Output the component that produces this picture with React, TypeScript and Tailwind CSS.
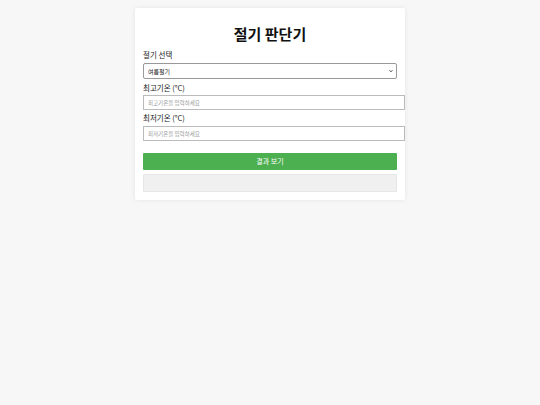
export default function App() {
  return (
    <div className="min-h-[405px] bg-[#f7f7f7] pt-[8px] font-['Noto_Sans_CJK_KR','Noto_Sans',sans-serif] text-[#222]">
      <div className="mx-auto w-[270px] bg-white px-[8px] pt-[16px] pb-[8px] shadow-[0_0_5px_rgba(0,0,0,0.08)] rounded-[2px]">
        <h1 className="text-center text-[15px] leading-[20px] font-bold text-[#111] mb-[6px]">절기 판단기</h1>

        <label className="block text-[7.5px] leading-[10px] mb-[3px]">절기 선택</label>
        <div className="relative">
          <select
            defaultValue="summer"
            className="block w-full h-[16px] appearance-none border border-[#999] rounded-[2px] bg-white px-[4px] text-[6px] text-[#222] outline-none"
          >
            <option value="spring">봄절기</option>
            <option value="summer">여름절기</option>
            <option value="autumn">가을절기</option>
            <option value="winter">겨울절기</option>
          </select>
          <svg
            className="pointer-events-none absolute right-[4px] top-[6px] w-[4px] h-[4px]"
            viewBox="0 0 10 10"
            fill="none"
            stroke="#222"
            strokeWidth="2.2"
          >
            <path d="M1.5 3.2 L5 6.8 L8.5 3.2" />
          </svg>
        </div>

        <label className="block text-[7.5px] leading-[10px] mt-[4px] mb-[2px]">최고기온 (°C)</label>
        <input
          type="number"
          placeholder="최고기온을 입력하세요"
          className="block w-[262px] h-[15px] border border-[#bbb] px-[4px] text-[5.5px] placeholder:text-[#999] outline-none"
        />

        <label className="block text-[7.5px] leading-[10px] mt-[3px] mb-[3px]">최저기온 (°C)</label>
        <input
          type="number"
          placeholder="최저기온을 입력하세요"
          className="block w-[262px] h-[15px] border border-[#bbb] px-[4px] text-[5.5px] placeholder:text-[#999] outline-none"
        />

        <button className="block w-full h-[17px] mt-[12px] bg-[#4caf50] text-white text-[7px] leading-[17px] rounded-[1px]">
          결과 보기
        </button>

        <div className="h-[18px] mt-[4px] bg-[#f0f0f0] border border-[#e6e6e6] rounded-[1px]"></div>
      </div>
    </div>
  );
}
